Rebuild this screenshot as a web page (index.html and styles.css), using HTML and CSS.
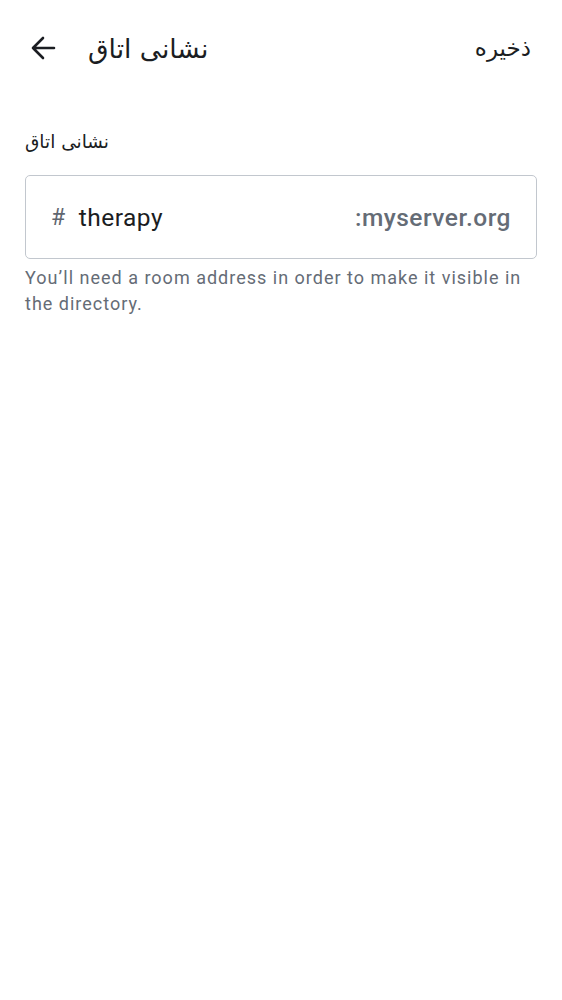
FILE: index.html
```html
<!DOCTYPE html>
<html lang="fa">
<head>
<meta charset="utf-8">
<link rel="stylesheet" href="styles.css">
</head>
<body>
<div class="screen">
  <header class="topbar">
    <div class="left">
      <span class="back">
        <svg width="26" height="26" viewBox="0 0 26 26"><path d="M24 13H3M13 3L3 13l10 10" fill="none" stroke="#1b1d22" stroke-width="2.6" stroke-linecap="round" stroke-linejoin="round"/></svg>
      </span>
      <h1 class="title" dir="rtl">نشانی اتاق</h1>
    </div>
    <span class="save" dir="rtl">ذخیره</span>
  </header>
  <main class="content">
    <div class="label" dir="rtl">نشانی اتاق</div>
    <div class="field">
      <span class="hash">#</span>
      <span class="value">therapy</span>
      <span class="server">:myserver.org</span>
    </div>
    <p class="helper">You’ll need a room address in order to make it visible in the directory.</p>
  </main>
</div>
</body>
</html>
```
FILE: styles.css
```css
html, body {
  margin: 0;
  padding: 0;
  background: #ffffff;
}
body {
  font-family: Roboto, "DejaVu Sans", sans-serif;
  color: #1b1d22;
}
.screen {
  width: 562px;
  min-height: 1000px;
}
.topbar {
  display: flex;
  align-items: center;
  justify-content: space-between;
  height: 96px;
  padding: 0 31px 0 30px;
  box-sizing: border-box;
}
.left {
  display: flex;
  align-items: center;
  gap: 32px;
}
.back {
  display: flex;
  width: 26px;
  height: 26px;
}
.title {
  margin: 0;
  font-size: 26.5px;
  font-weight: 400;
  font-family: "DejaVu Sans", sans-serif;
  color: #1b1d22;
}
.save {
  font-size: 23px;
  font-family: "DejaVu Sans", sans-serif;
  color: #1b1d22;
}
.content {
  padding: 32px 25px 0 25px;
}
.label {
  text-align: left;
  font-size: 18.5px;
  font-family: "DejaVu Sans", sans-serif;
  color: #1b1d22;
  line-height: 28px;
}
.field {
  margin-top: 19px;
  height: 84px;
  box-sizing: border-box;
  border: 1px solid #c2c7ce;
  border-radius: 5px;
  display: flex;
  align-items: center;
  padding: 0 25px;
  font-size: 24.5px;
  letter-spacing: 0.5px;
}
.hash {
  color: #5f6670;
  font-size: 23px;
  margin-right: 13px;
}
.value {
  color: #1b1d22;
  flex: 1;
}
.server {
  color: #656c76;
  font-weight: 500;
}
.helper {
  margin: 6px 0 0 0;
  font-size: 18px;
  line-height: 26px;
  color: #656c76;
  letter-spacing: 1px;
}
```
